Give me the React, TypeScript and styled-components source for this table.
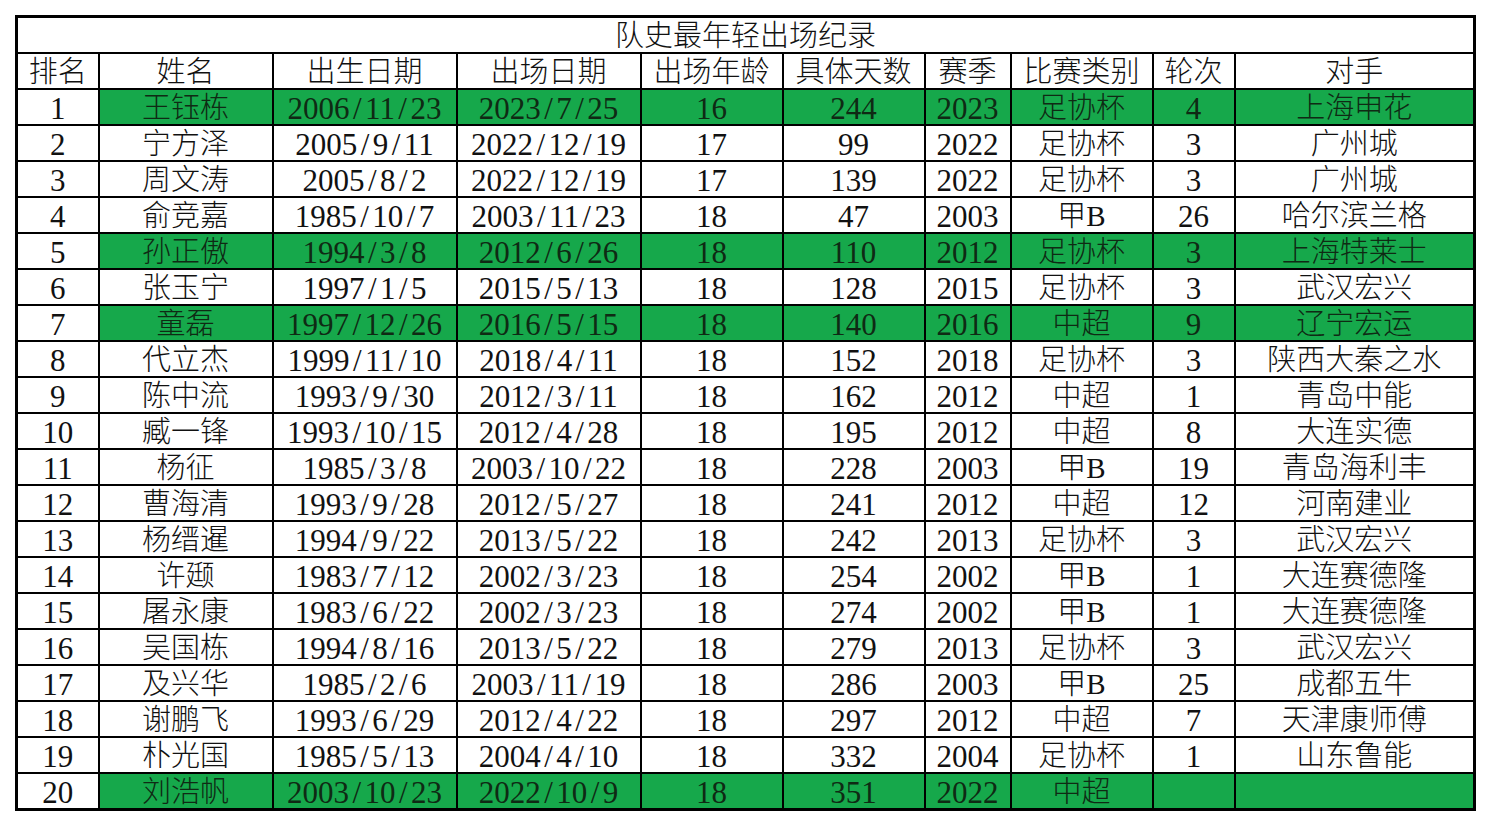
import React from "react";
import styled, { createGlobalStyle } from "styled-components";

const GlobalStyle = createGlobalStyle`
    body {
        margin: 0;
        background: #ffffff;
        font-family: "Liberation Serif", "Noto Sans CJK SC", serif;
        color: #111;
    }
`;

const COLUMNS = [
    { title: "排名", width: 82 },
    { title: "姓名", width: 174 },
    { title: "出生日期", width: 184 },
    { title: "出场日期", width: 184 },
    { title: "出场年龄", width: 142 },
    { title: "具体天数", width: 142 },
    { title: "赛季", width: 86 },
    { title: "比赛类别", width: 142 },
    { title: "轮次", width: 82 },
    { title: "对手", width: 240 },
];

// [name, born, debut, age, days, season, type, round, opponent, highlighted]
const ROWS: [string, string, string, string, string, string, string, string, string, boolean][] = [
    ["王钰栋", "2006/11/23", "2023/7/25", "16", "244", "2023", "足协杯", "4", "上海申花", true],
    ["宁方泽", "2005/9/11", "2022/12/19", "17", "99", "2022", "足协杯", "3", "广州城", false],
    ["周文涛", "2005/8/2", "2022/12/19", "17", "139", "2022", "足协杯", "3", "广州城", false],
    ["俞竞嘉", "1985/10/7", "2003/11/23", "18", "47", "2003", "甲B", "26", "哈尔滨兰格", false],
    ["孙正傲", "1994/3/8", "2012/6/26", "18", "110", "2012", "足协杯", "3", "上海特莱士", true],
    ["张玉宁", "1997/1/5", "2015/5/13", "18", "128", "2015", "足协杯", "3", "武汉宏兴", false],
    ["童磊", "1997/12/26", "2016/5/15", "18", "140", "2016", "中超", "9", "辽宁宏运", true],
    ["代立杰", "1999/11/10", "2018/4/11", "18", "152", "2018", "足协杯", "3", "陕西大秦之水", false],
    ["陈中流", "1993/9/30", "2012/3/11", "18", "162", "2012", "中超", "1", "青岛中能", false],
    ["臧一锋", "1993/10/15", "2012/4/28", "18", "195", "2012", "中超", "8", "大连实德", false],
    ["杨征", "1985/3/8", "2003/10/22", "18", "228", "2003", "甲B", "19", "青岛海利丰", false],
    ["曹海清", "1993/9/28", "2012/5/27", "18", "241", "2012", "中超", "12", "河南建业", false],
    ["杨缙暹", "1994/9/22", "2013/5/22", "18", "242", "2013", "足协杯", "3", "武汉宏兴", false],
    ["许颋", "1983/7/12", "2002/3/23", "18", "254", "2002", "甲B", "1", "大连赛德隆", false],
    ["屠永康", "1983/6/22", "2002/3/23", "18", "274", "2002", "甲B", "1", "大连赛德隆", false],
    ["吴国栋", "1994/8/16", "2013/5/22", "18", "279", "2013", "足协杯", "3", "武汉宏兴", false],
    ["及兴华", "1985/2/6", "2003/11/19", "18", "286", "2003", "甲B", "25", "成都五牛", false],
    ["谢鹏飞", "1993/6/29", "2012/4/22", "18", "297", "2012", "中超", "7", "天津康师傅", false],
    ["朴光国", "1985/5/13", "2004/4/10", "18", "332", "2004", "足协杯", "1", "山东鲁能", false],
    ["刘浩帆", "2003/10/23", "2022/10/9", "18", "351", "2022", "中超", "", "", true],
];

const renderNumber = (value: string) =>
    value.split("/").map((part, i) => (
        <React.Fragment key={i}>
            {i > 0 && <Slash>/</Slash>}
            {part}
        </React.Fragment>
    ));

export default function App() {
    return (
        <Page>
            <GlobalStyle />
            <Sheet>
                <colgroup>
                    {COLUMNS.map((col) => (
                        <col key={col.title} style={{ width: col.width }} />
                    ))}
                </colgroup>
                <tbody>
                    <tr>
                        <TitleCell colSpan={COLUMNS.length}>队史最年轻出场纪录</TitleCell>
                    </tr>
                    <tr>
                        {COLUMNS.map((col) => (
                            <HeadCell key={col.title}>{col.title}</HeadCell>
                        ))}
                    </tr>
                    {ROWS.map((row, idx) => {
                        const green = row[9];
                        return (
                            <tr key={idx}>
                                <Cell $numeric>{idx + 1}</Cell>
                                <Cell $green={green}>{row[0]}</Cell>
                                <Cell $green={green} $numeric>{renderNumber(row[1])}</Cell>
                                <Cell $green={green} $numeric>{renderNumber(row[2])}</Cell>
                                <Cell $green={green} $numeric>{row[3]}</Cell>
                                <Cell $green={green} $numeric>{row[4]}</Cell>
                                <Cell $green={green} $numeric>{row[5]}</Cell>
                                <Cell $green={green}>{row[6]}</Cell>
                                <Cell $green={green} $numeric>{row[7]}</Cell>
                                <Cell $green={green}>{row[8]}</Cell>
                            </tr>
                        );
                    })}
                </tbody>
            </Sheet>
        </Page>
    );
}

const Page = styled.div`
    padding: 15px 0 0 15px;
    width: 1490px;
    height: 824px;
    box-sizing: border-box;
`;

const Sheet = styled.table`
    border-collapse: collapse;
    table-layout: fixed;
    width: 1460px;
    border: 3px solid #000;
`;

const BaseCell = styled.td`
    border: 2px solid #000;
    height: 31px;
    padding: 3px 0 0;
    text-align: center;
    vertical-align: middle;
    white-space: nowrap;
    overflow: hidden;
    font-size: 29px;
    font-weight: 300;
    line-height: 31px;
`;

const TitleCell = styled(BaseCell)``;

const HeadCell = styled(BaseCell)``;

const Cell = styled(BaseCell)<{ $green?: boolean; $numeric?: boolean }>`
    background: ${(p) => (p.$green ? "#16a84b" : "#ffffff")};
    color: ${(p) => (p.$green ? "#0f2a14" : "#111")};
    font-size: ${(p) => (p.$numeric ? "31px" : "29px")};
`;

const Slash = styled.span`
    display: inline-block;
    width: 0.5em;
    text-align: center;
`;
